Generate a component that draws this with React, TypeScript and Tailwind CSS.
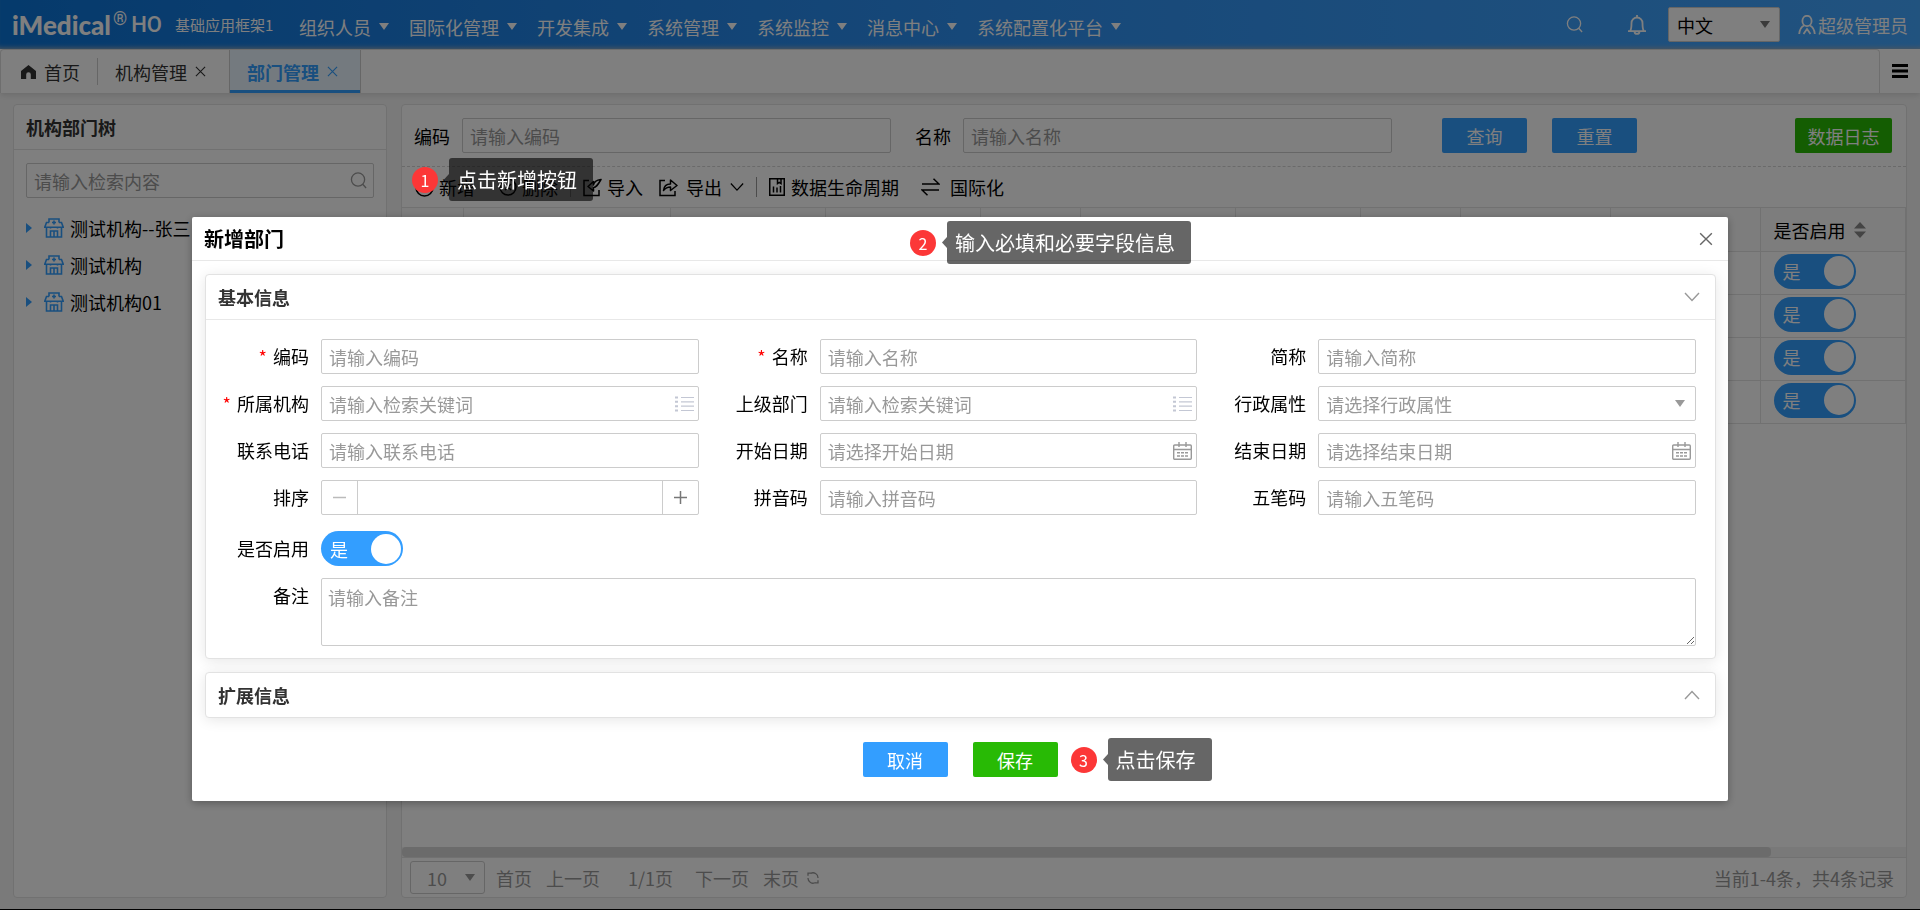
import React, { useState } from 'react';

interface IconProps {
  className?: string;
}

const inputClass =
  'h-[35px] w-full min-w-0 rounded-xs border border-[#ccc] bg-white px-[7px] leading-6 text-black placeholder:text-[#999] outline-none';

const Caret: React.FC<IconProps> = ({ className = '' }) => (
  <svg className={className} width="10" height="7" viewBox="0 0 10 7" fill="currentColor">
    <path d="M0 0h10L5 7z" />
  </svg>
);

const CloseIcon: React.FC<IconProps> = ({ className = '' }) => (
  <svg className={className} viewBox="0 0 12 12" fill="none" stroke="currentColor" strokeWidth="1.2">
    <path d="M1 1l10 10M11 1L1 11" />
  </svg>
);

const ChevronIcon: React.FC<IconProps> = ({ className = '' }) => (
  <svg className={className} width="16" height="10" viewBox="0 0 16 10" fill="none" stroke="currentColor" strokeWidth="1.4">
    <path d="M1 1l7 7.5L15 1" />
  </svg>
);

const SearchIcon: React.FC<IconProps> = ({ className = '' }) => (
  <svg className={className} viewBox="0 0 18 18" fill="none" stroke="currentColor" strokeWidth="1.4">
    <circle cx="8.5" cy="8" r="7" />
    <path d="M13.5 13l3.500 4" />
  </svg>
);

const HomeIcon: React.FC = () => (
  <svg width="15" height="14" viewBox="0 0 15 14" fill="#333">
    <path d="M7.500 0L15 6v8H9.800V9.500a2.300 2.300 0 0 0-4.600 0V14H0V6z" />
  </svg>
);

const HospitalIcon: React.FC = () => (
  <svg width="20" height="20" viewBox="0 0 20 20" fill="none" stroke="#339eff" strokeWidth="1.600">
    <path d="M5 4.500V1h10v3.500M10 2.500v4M8 4.500h4" />
    <path d="M5 4.500H2.500L.8 9.200h18.400L17.500 4.500H15M2.500 9.500V19h15V9.500" />
    <path d="M6.500 19v-6h7v6M10 13v6M6.500 9v1.500M13.500 9v1.500" />
  </svg>
);

const ListIcon: React.FC = () => (
  <svg width="19" height="16" viewBox="0 0 19 16" fill="none" stroke="#c3c7d4" strokeWidth="1.200">
    <path d="M6 1.500h13M6 5.800h13M6 10.200h13M6 14.500h13" />
    <path d="M0 1.500h3M0 5.800h3M0 10.200h3M0 14.500h3" strokeWidth="2" />
  </svg>
);

const CalendarIcon: React.FC = () => (
  <svg width="19" height="18" viewBox="0 0 19 18" fill="none" stroke="#999" strokeWidth="1.400">
    <rect x="0.700" y="3" width="17.600" height="14.200" rx="1" />
    <path d="M6 0v5M13 0v5M1 7.500h17" />
    <path d="M4 10.800h3M8 10.800h3M12 10.800h3M4 14h3M8 14h3M12 14h3" />
  </svg>
);

const AddIcon: React.FC = () => (
  <svg width="19" height="19" viewBox="0 0 19 19" fill="none" stroke="black" strokeWidth="1.500">
    <circle cx="9.500" cy="9.500" r="8.500" />
    <path d="M9.500 5v9M5 9.500h9" />
  </svg>
);

const RemoveIcon: React.FC = () => (
  <svg width="18" height="18" viewBox="0 0 18 18" fill="none" stroke="black" strokeWidth="1.500">
    <circle cx="9" cy="9" r="8" />
    <path d="M6 6l6 6M12 6l-6 6" />
  </svg>
);

const ImportIcon: React.FC = () => (
  <svg width="19" height="19" viewBox="0 0 19 19" fill="none" stroke="black" strokeWidth="1.500">
    <path d="M6 2.500H1v15h15V12" />
    <path d="M18 1.500c-4 .5-7 2.500-7.500 5.500V3.500L5 8.500l5.500 4.500V9.500c3 0 4.500-3 7.500-8z" strokeLinejoin="round" />
  </svg>
);

const ExportIcon: React.FC = () => (
  <svg width="19" height="19" viewBox="0 0 19 19" fill="none" stroke="black" strokeWidth="1.500">
    <path d="M6 2.500H1v15h15V13" />
    <path d="M4.500 12.500c.5-5 3-6.500 7-6.500V2l6.500 5.500-6.500 5V9c-3 0-5 1-7 3.500z" strokeLinejoin="round" />
  </svg>
);

const LifecycleIcon: React.FC = () => (
  <svg width="16" height="18" viewBox="0 0 16 18" fill="none" stroke="black" strokeWidth="1.500">
    <rect x="0.750" y="0.750" width="14.500" height="16.500" />
    <path d="M8.500 1v4.500l1.700-1.200L12 5.500V1M4.500 14.500v-6M8 14.500V9.500M11.500 14.500V8" />
  </svg>
);

const SwapIcon: React.FC = () => (
  <svg width="19" height="18" viewBox="0 0 19 18" fill="none" stroke="black" strokeWidth="1.500">
    <path d="M1 6h17L12.500.8M18 12H1l5.500 5.200" />
  </svg>
);

// numbered step marker with its hint bubble
const Callout: React.FC<{ step: number; text: string; className: string }> = ({ step, text, className }) => (
  <div className={`absolute z-50 flex items-center gap-[11px] whitespace-nowrap text-white ${className}`}>
    <span className="flex size-[26px] items-center justify-center rounded-full bg-[#fc3737] text-base">{step}</span>
    <span className="relative flex h-[43px] items-center rounded-[3px] bg-black/60 pr-4 pl-2 text-xl font-normal">
      <svg className="absolute top-[16px] -left-[5px]" width="5" height="11" viewBox="0 0 5 11" fill="black" fillOpacity="0.6">
        <path d="M5 0v11L0 5.500z" />
      </svg>
      {text}
    </span>
  </div>
);

const Switch: React.FC<{ id: string; label?: string }> = ({ id, label }) => {
  const [checked, setChecked] = useState(true);
  return (
    <label
      htmlFor={id}
      className={`relative flex h-[35px] w-[82px] cursor-pointer items-center rounded-full text-white ${
        checked ? 'justify-start bg-[#339eff] pl-[9px]' : 'justify-end bg-[#bbb] pr-[9px]'
      }`}
    >
      <input
        id={id}
        type="checkbox"
        aria-label={label}
        className="sr-only"
        checked={checked}
        onChange={(e) => setChecked(e.target.checked)}
      />
      {checked ? '是' : '否'}
      <span className={`absolute size-[30px] rounded-full bg-white ${checked ? 'right-0.5' : 'left-0.5'}`} />
    </label>
  );
};

const menus = ['组织人员', '国际化管理', '开发集成', '系统管理', '系统监控', '消息中心', '系统配置化平台'];

const Header: React.FC = () => (
  <header className="flex h-[49px] shrink-0 items-center bg-linear-to-r from-[#0a74d8] via-[#2d90f2] to-[#43a6ff] px-3 text-white shadow-[inset_0_-5px_5px_-4px_#a8b4bd]">
    <div className="flex w-[163px] shrink-0 items-center">
      <span className="font-[Lato] text-[26px] leading-7 font-black">iMedical</span>
      <span className="ml-0.5 self-start font-[Roboto] text-lg leading-4">®</span>
      <span className="ml-1 font-[Roboto] text-[22px] leading-7 font-medium">HO</span>
    </div>
    <span className="w-[124px] shrink-0 text-[15px]">基础应用框架1</span>
    <nav className="flex gap-5 pt-1">
      {menus.map((menu) => (
        <a key={menu} href="#" className="flex items-center gap-2 whitespace-nowrap">
          {menu}
          <Caret />
        </a>
      ))}
    </nav>
    <div className="ml-auto flex items-center">
      <button type="button" aria-label="搜索" className="mr-[44px]">
        <SearchIcon className="size-[17px]" />
      </button>
      <button type="button" aria-label="消息" className="mr-[21px]">
        <svg width="20" height="21" viewBox="0 0 20 21" fill="none" stroke="currentColor" strokeWidth="1.800">
          <path d="M1 17.200h18M3.200 17c1.300-2 1.300-4 1.300-8a5.500 5.500 0 0 1 11 0c0 4 0 6 1.300 8M7.500 18c.5 2.500 4.500 2.500 5 0M10 1v2" />
        </svg>
      </button>
      <div className="relative mr-[18px] text-black">
        <select aria-label="语言" className="h-[35px] w-[112px] appearance-none rounded-xs border border-[#ccc] bg-white px-2">
          <option>中文</option>
        </select>
        <Caret className="pointer-events-none absolute top-[14px] right-[10px] text-[#777]" />
      </div>
      <a href="#" className="flex items-center gap-0.5 whitespace-nowrap">
        <svg width="18" height="20" viewBox="0 0 18 20" fill="none" stroke="currentColor" strokeWidth="1.800">
          <ellipse cx="9" cy="6" rx="4.600" ry="5.200" />
          <path d="M1.200 19c.3-4 2-7 4.800-8.500M16.800 19c-.3-4-2-7-4.800-8.500M5.500 19L9 14l3.500 5" />
        </svg>
        超级管理员
      </a>
    </div>
  </header>
);

const TabBar: React.FC = () => (
  <div className="relative flex h-[44px] shrink-0 bg-white text-[#333] shadow-[0_2px_6px_#0000001f]">
    <div className="flex flex-1 rounded-t border border-b-0 border-[#ddd]">
      <button type="button" className="flex w-[96px] items-center gap-2 pl-5">
        <HomeIcon />
        首页
      </button>
      <div className="my-2 w-px bg-[#ccc]" />
      <div className="flex flex-1">
        <div className="flex w-[131px] items-center gap-2 pl-[17px]">
          <button type="button">机构管理</button>
          <button type="button" aria-label="关闭机构管理">
            <CloseIcon className="size-[11px]" />
          </button>
        </div>
        <div className="flex w-[132px] items-center gap-2 border-x border-[#ccc] bg-[#e8f5ff] pl-[17px] text-[#339eff] shadow-[inset_0_-3px_0_#339eff]">
          <button type="button" className="font-bold">部门管理</button>
          <button type="button" aria-label="关闭部门管理">
            <CloseIcon className="size-[11px]" />
          </button>
        </div>
      </div>
    </div>
    <button type="button" aria-label="菜单" className="flex w-10 items-center justify-center">
      <svg width="16" height="14" viewBox="0 0 16 14" stroke="black" strokeWidth="3">
        <path d="M0 1.500h16M0 7h16M0 12.500h16" />
      </svg>
    </button>
  </div>
);

const orgs = ['测试机构--张三', '测试机构', '测试机构01'];

const OrgTree: React.FC = () => (
  <aside className="w-[374px] shrink-0 rounded border border-[#e2e2e2] bg-white">
    <h2 className="flex h-[45px] items-center border-b border-[#e2e2e2] px-3 font-bold text-[#333]">机构部门树</h2>
    <div className="relative mx-3 mt-[13px]">
      <input aria-label="检索" placeholder="请输入检索内容" className={inputClass} />
      <SearchIcon className="absolute top-[9px] right-[7px] size-[17px] text-[#999]" />
    </div>
    <ul className="mt-[11px]">
      {orgs.map((org) => (
        <li key={org} className="flex h-[37px] items-center pl-3">
          <svg width="6" height="10" viewBox="0 0 6 10" fill="#339eff">
            <path d="M0 0l6 5-6 5z" />
          </svg>
          <button type="button" className="ml-3 flex items-center gap-1.5 whitespace-nowrap">
            <HospitalIcon />
            {org}
          </button>
        </li>
      ))}
    </ul>
  </aside>
);

const Toolbar: React.FC = () => (
  <div className="flex h-[40px] items-center pl-[13px] whitespace-nowrap">
    <div className="relative flex h-full items-center">
      <button type="button" className="flex items-center gap-[5px]">
        <AddIcon />
        新增
      </button>
      <Callout step={1} text="点击新增按钮" className="-top-[9px] -left-[3px]" />
    </div>
    <button type="button" className="ml-6 flex items-center gap-[5px]">
      <RemoveIcon />
      删除
    </button>
    <div className="mx-3 h-5 w-px bg-[#bbb]" />
    <button type="button" className="flex items-center gap-[5px]">
      <ImportIcon />
      导入
    </button>
    <button type="button" className="ml-4 flex items-center gap-2">
      <ExportIcon />
      导出
      <ChevronIcon className="w-[14px]" />
    </button>
    <div className="mx-3 h-5 w-px bg-[#999]" />
    <button type="button" className="flex items-center gap-1.5">
      <LifecycleIcon />
      数据生命周期
    </button>
    <button type="button" className="ml-[22px] flex items-center gap-2.5">
      <SwapIcon />
      国际化
    </button>
  </div>
);

const rows = [1, 2, 3, 4];
const emptyCols = [1, 2, 3, 4, 5, 6, 7, 8, 9, 10];

const DeptTable: React.FC = () => (
  <table className="w-full table-fixed border-collapse border-y border-[#e2e2e2]">
    <colgroup>
      <col className="w-[61px]" />
      <col className="w-[207px]" />
      <col className="w-[155px]" />
      <col className="w-[155px]" />
      <col className="w-[100px]" />
      <col className="w-[155px]" />
      <col className="w-[125px]" />
      <col className="w-[100px]" />
      <col className="w-[150px]" />
      <col className="w-[150px]" />
      <col />
    </colgroup>
    <thead>
      <tr className="h-[44px] bg-[#fafafa]">
        {emptyCols.map((c) => (
          <td key={c} className="border-r border-[#e2e2e2]" />
        ))}
        <th className="border-r border-[#e2e2e2] pl-[13px] font-normal">
          <button type="button" className="flex items-center gap-2">
            是否启用
            <svg width="12" height="16" viewBox="0 0 12 16" fill="#888">
              <path d="M0 6.500L6 0l6 6.500zM0 9.500h12L6 16z" />
            </svg>
          </button>
        </th>
      </tr>
    </thead>
    <tbody>
      {rows.map((row) => (
        <tr key={row} className="h-[43px] border-t border-[#e2e2e2]">
          {emptyCols.map((c) => (
            <td key={c} className="border-r border-[#e2e2e2]" />
          ))}
          <td className="border-r border-[#e2e2e2] pb-1 pl-[13px]">
            <Switch id={`row-enabled-${row}`} label="是否启用" />
          </td>
        </tr>
      ))}
    </tbody>
  </table>
);

const Pagination: React.FC = () => (
  <div className="flex h-[40px] items-center border-t border-[#e2e2e2] pr-3 pl-2 whitespace-nowrap text-[#999]">
    <div className="relative mr-[11px]">
      <select aria-label="每页条数" className="h-[33px] w-[75px] appearance-none rounded-[3px] border border-[#ccc] bg-white pl-4">
        <option>10</option>
      </select>
      <Caret className="pointer-events-none absolute top-[13px] right-[10px]" />
    </div>
    <button type="button">首页</button>
    <button type="button" className="ml-3.5">上一页</button>
    <span className="mr-[22px] ml-7">1/1页</span>
    <button type="button">下一页</button>
    <button type="button" className="ml-3.5">末页</button>
    <button type="button" aria-label="刷新" className="ml-2">
      <svg width="12" height="12" viewBox="0 0 12 12" fill="none" stroke="currentColor" strokeWidth="1.300">
        <path d="M3.500 1.500A5 5 0 0 1 11 6M8.500 10.500A5 5 0 0 1 1 6M1 3.800V1.200h3M11 8.200v2.600H8" />
      </svg>
    </button>
    <span className="ml-auto">当前1-4条，共4条记录</span>
  </div>
);

const DeptList: React.FC = () => (
  <section className="flex min-w-0 flex-1 flex-col rounded border border-[#e2e2e2] bg-white">
    <form className="flex h-[62px] shrink-0 items-center border-b border-dashed border-[#d5d5d5] pr-[14px] pl-3 whitespace-nowrap">
      <label htmlFor="q-code" className="mr-3">编码</label>
      <div className="w-[429px]">
        <input id="q-code" placeholder="请输入编码" className={inputClass} />
      </div>
      <label htmlFor="q-name" className="mr-3 ml-6">名称</label>
      <div className="w-[429px]">
        <input id="q-name" placeholder="请输入名称" className={inputClass} />
      </div>
      <button type="button" className="ml-[50px] h-[35px] w-[85px] rounded-xs bg-[#339eff] text-white">查询</button>
      <button type="button" className="ml-[25px] h-[35px] w-[85px] rounded-xs bg-[#339eff] text-white">重置</button>
      <button type="button" className="ml-auto h-[35px] w-[97px] rounded-xs bg-[#28ba05] text-white">数据日志</button>
    </form>
    <Toolbar />
    <DeptTable />
    <div className="mt-auto h-2.5 bg-[#f2f2f2]">
      <div className="h-full w-[91%] rounded bg-[#d6d6d6]" />
    </div>
    <Pagination />
  </section>
);

interface FieldProps {
  id: string;
  label: string;
  required?: boolean;
  children: React.ReactNode;
}

const Field: React.FC<FieldProps> = ({ id, label, required, children }) => (
  <div className="flex">
    <label htmlFor={id} className="mr-3 w-[103px] shrink-0 text-right leading-[35px] whitespace-nowrap">
      {required && <span className="mr-1.5 text-[#ff0000]">*</span>}
      {label}
    </label>
    <div className="relative min-w-0 flex-1">{children}</div>
  </div>
);

interface TextFieldProps {
  id: string;
  label: string;
  placeholder: string;
  required?: boolean;
  icon?: React.ReactNode;
}

const TextField: React.FC<TextFieldProps> = ({ id, label, placeholder, required, icon }) => (
  <Field id={id} label={label} required={required}>
    <input id={id} placeholder={placeholder} className={inputClass} />
    {icon && <span className="absolute inset-y-0 right-[5px] flex items-center">{icon}</span>}
  </Field>
);

const panelClass = 'rounded border border-[#e2e2e2] bg-white shadow-[0_2px_14px_#0000001a]';

const DeptDialog: React.FC = () => (
  <div className="fixed inset-0 z-20 flex items-start justify-center bg-black/50 pt-[217px]">
    <div role="dialog" aria-label="新增部门" className="relative w-4/5 rounded-xs bg-white shadow-[0_2px_8px_#0000004d]">
      <div className="flex h-[44px] items-center justify-between border-b border-[#e8e8e8] pr-[15px] pl-3">
        <h2 className="text-xl font-bold">新增部门</h2>
        <button type="button" aria-label="关闭" className="text-[#666]">
          <CloseIcon className="size-[14px]" />
        </button>
      </div>
      <Callout step={2} text="输入必填和必要字段信息" className="top-1 left-[718px]" />

      <div className="flex flex-col gap-[13px] pt-[13px] pr-3 pl-[13px]">
        <section className={panelClass}>
          <div className="flex h-[45px] items-center justify-between border-b border-[#e8e8e8] pr-[15px] pl-3 font-bold text-[#333]">
            基本信息
            <button type="button" aria-label="收起" className="text-[#999]">
              <ChevronIcon />
            </button>
          </div>
          <div className="pt-[19px] pr-[19px] pb-3">
            <div className="grid grid-cols-3 gap-x-1.5 gap-y-3">
              <TextField id="code" label="编码" placeholder="请输入编码" required />
              <TextField id="name" label="名称" placeholder="请输入名称" required />
              <TextField id="short" label="简称" placeholder="请输入简称" />
              <TextField id="org" label="所属机构" placeholder="请输入检索关键词" required icon={<ListIcon />} />
              <TextField id="parent" label="上级部门" placeholder="请输入检索关键词" icon={<ListIcon />} />
              <Field id="attr" label="行政属性">
                <select id="attr" className="h-[35px] w-full appearance-none rounded-xs border border-[#ccc] bg-white px-[7px] text-[#999]">
                  <option>请选择行政属性</option>
                </select>
                <Caret className="pointer-events-none absolute top-[14px] right-[11px] text-[#999]" />
              </Field>
              <TextField id="phone" label="联系电话" placeholder="请输入联系电话" />
              <TextField id="start" label="开始日期" placeholder="请选择开始日期" icon={<CalendarIcon />} />
              <TextField id="end" label="结束日期" placeholder="请选择结束日期" icon={<CalendarIcon />} />
              <Field id="sort" label="排序">
                <div className="flex h-[35px] rounded-xs border border-[#ccc] text-[#777]">
                  <button type="button" aria-label="减少" className="flex w-[35px] items-center justify-center text-[#bbb]">
                    <svg width="13" height="13" viewBox="0 0 13 13" stroke="currentColor" strokeWidth="1.500">
                      <path d="M0 6.500h13" />
                    </svg>
                  </button>
                  <input id="sort" className="min-w-0 flex-1 border-x border-[#ccc] px-[7px] text-black outline-none" />
                  <button type="button" aria-label="增加" className="flex w-[35px] items-center justify-center">
                    <svg width="13" height="13" viewBox="0 0 13 13" stroke="currentColor" strokeWidth="1.500">
                      <path d="M0 6.500h13M6.500 0v13" />
                    </svg>
                  </button>
                </div>
              </Field>
              <TextField id="pinyin" label="拼音码" placeholder="请输入拼音码" />
              <TextField id="wubi" label="五笔码" placeholder="请输入五笔码" />
            </div>
            <div className="mt-4 flex flex-col gap-3">
              <Field id="enabled" label="是否启用">
                <Switch id="enabled" />
              </Field>
              <Field id="remark" label="备注">
                <textarea
                  id="remark"
                  placeholder="请输入备注"
                  className="block h-[68px] w-full resize rounded-xs border border-[#ccc] px-1.5 py-1.5 leading-6 outline-none placeholder:text-[#999]"
                />
              </Field>
            </div>
          </div>
        </section>

        <section className={panelClass}>
          <div className="flex h-[44px] items-center justify-between pr-[15px] pl-3 font-bold text-[#333]">
            扩展信息
            <button type="button" aria-label="展开" className="rotate-180 text-[#999]">
              <ChevronIcon />
            </button>
          </div>
        </section>
      </div>

      <div className="flex justify-center gap-[25px] py-6 text-white">
        <button type="button" className="h-[35px] w-[85px] rounded-xs bg-[#339eff]">取消</button>
        <div className="relative">
          <button type="button" className="h-[35px] w-[85px] rounded-xs bg-[#28ba05]">保存</button>
          <Callout step={3} text="点击保存" className="-top-1 left-full ml-[13px]" />
        </div>
      </div>
    </div>
  </div>
);

const App: React.FC = () => (
  <div className="flex h-screen flex-col overflow-hidden border-b border-black bg-[#f5f5f5] font-['Noto_Sans_CJK_SC',sans-serif] text-lg leading-6 text-black">
    <Header />
    <TabBar />
    <main className="flex min-h-0 flex-1 gap-[14px] px-[13px] py-[11px]">
      <OrgTree />
      <DeptList />
    </main>
    <DeptDialog />
  </div>
);

export default App;
